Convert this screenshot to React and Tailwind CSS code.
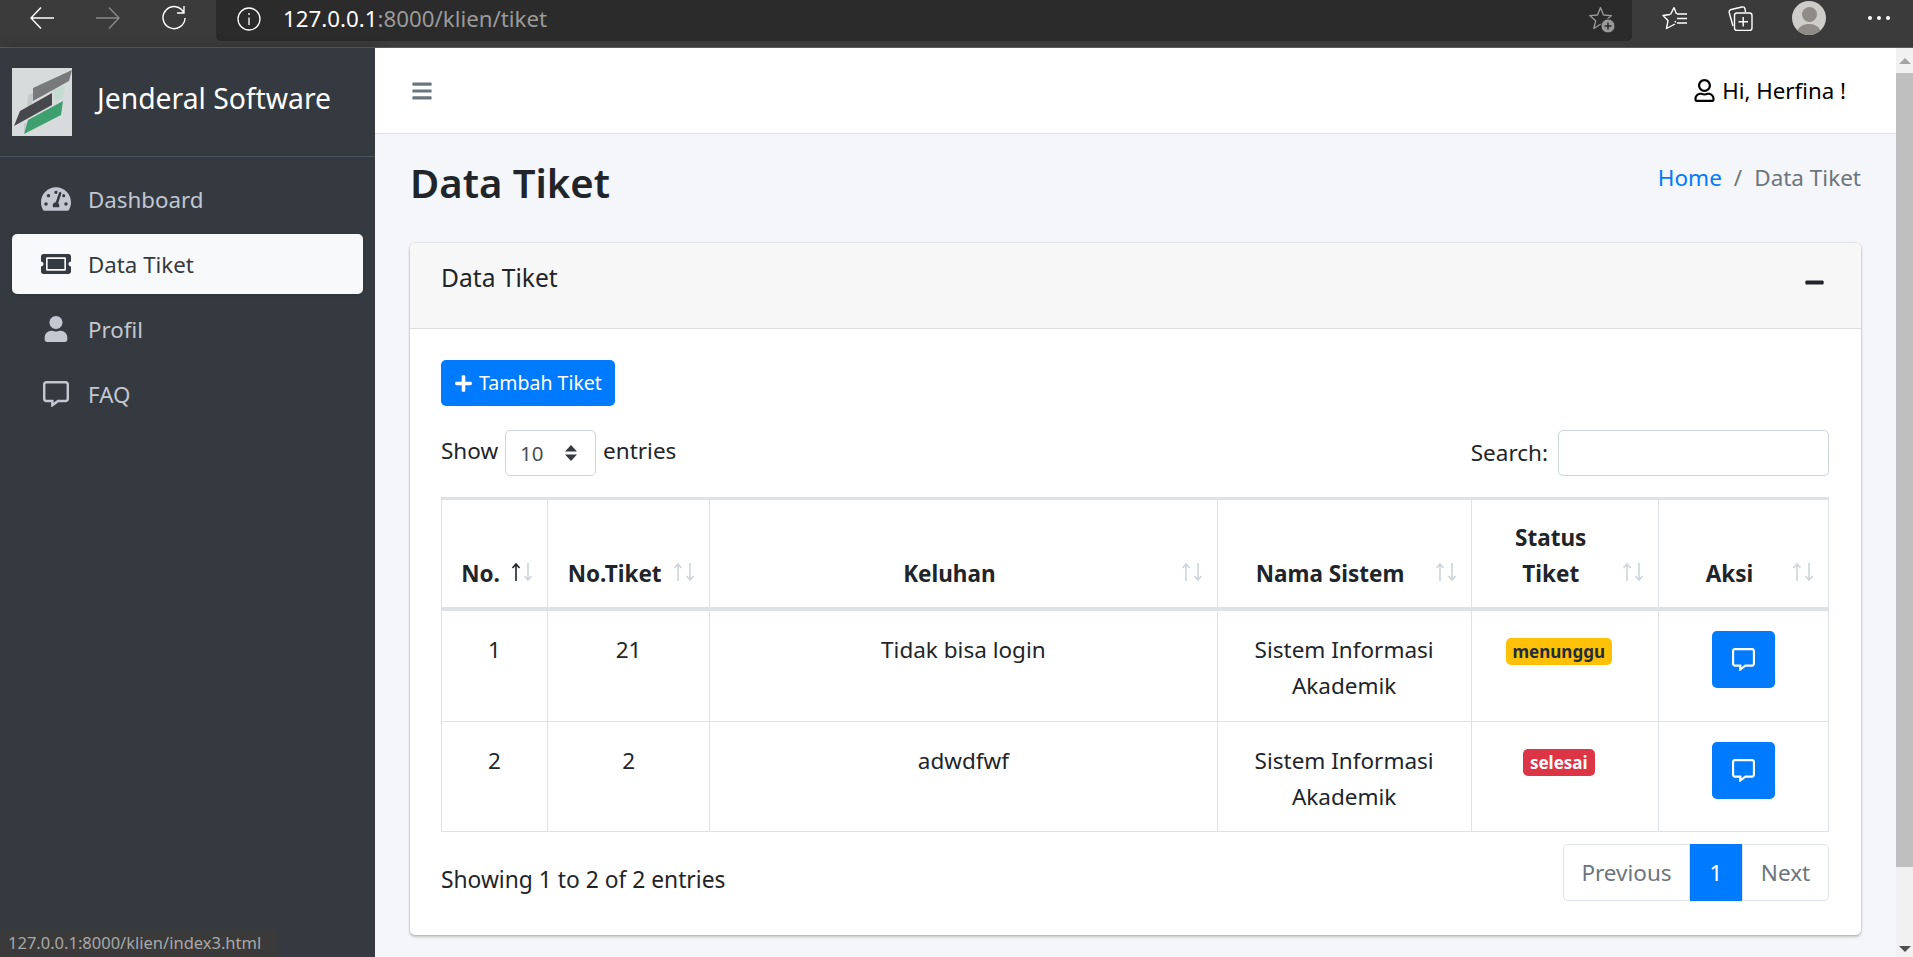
import React from 'react'
import { FaTachometerAlt, FaTicketAlt, FaUser, FaRegCommentAlt, FaPlus, FaBars, FaMinus, FaRegUser } from 'react-icons/fa'

const menu = [
  { label: 'Dashboard', Icon: FaTachometerAlt, size: 30 },
  { label: 'Data Tiket', Icon: FaTicketAlt, size: 30, active: true },
  { label: 'Profil', Icon: FaUser, size: 26 },
  { label: 'FAQ', Icon: FaRegCommentAlt, size: 26 },
]

const rows = [
  { no: '1', tiket: '21', keluhan: 'Tidak bisa login', status: 'menunggu', badge: 'bg-[#ffc107] text-[#1f2d3d]', height: 'h-[113px]' },
  { no: '2', tiket: '2', keluhan: 'adwdfwf', status: 'selesai', badge: 'bg-[#dc3545] text-white', height: 'h-[110px]' },
]

const SortArrows = ({ active }) => (
  <span className="absolute right-[12px] top-[61px] flex">
    <svg width="14" height="22" viewBox="0 0 14 22" fill="none" strokeWidth="1.6" className={active ? 'text-[#212529]' : 'text-[#ced4da]'} stroke="currentColor">
      <path d="M7 20V3M3.500 7 7 3l3.500 4" />
    </svg>
    <svg width="14" height="22" viewBox="0 0 14 22" fill="none" strokeWidth="1.6" stroke="#ced4da" className="-ml-[2px]">
      <path d="M7 2v17M3.500 15 7 19l3.500-4" />
    </svg>
  </span>
)

const Th = ({ children, active }) => (
  <th className="relative border border-[#dee2e6] border-b-[4px] border-b-[#dee2e6] pl-[13px] pr-[41px] pb-[15px] align-bottom text-center font-bold leading-[36px]">
    {children}
    <SortArrows active={active} />
  </th>
)

const Browser = () => (
  <div className="flex h-[48px] shrink-0 items-start border-b border-[#5c5c5c] bg-[#3b3b3b] text-white">
    <div className="flex h-[36px] w-[216px] shrink-0 items-center pl-[30px]">
      <svg width="24" height="24" viewBox="0 0 24 24" fill="none" stroke="#fff" strokeWidth="1.4">
        <path d="M24 12H1M11 1.500 1 12l10 10.500" />
      </svg>
      <svg width="24" height="24" viewBox="0 0 24 24" fill="none" stroke="#8a8a8a" strokeWidth="1.4" className="ml-[42px]">
        <path d="M0 12h23M13 1.500 23 12 13 22.500" />
      </svg>
      <svg width="24" height="26" viewBox="0 0 24 26" fill="none" stroke="#fff" strokeWidth="1.4" className="ml-[42px]">
        <path d="M22 8A11 11 0 1 0 23 13M22 1v7h-7" />
      </svg>
    </div>
    <div className="flex h-[41px] flex-1 items-center rounded-b-[5px] bg-[#2b2b2b] pb-[3px] pl-[21px] pr-[17px]">
      <svg width="24" height="24" viewBox="0 0 24 24" fill="none" stroke="#fff" strokeWidth="1.3">
        <circle cx="12" cy="12" r="11" />
        <path d="M12 10.500V18M12 6v2" />
      </svg>
      <span className="ml-[22px] text-[22.300px] leading-[28px]">
        127.0.0.1<span className="text-[#9a9a9a]">:8000/klien/tiket</span>
      </span>
      <svg width="27" height="27" viewBox="0 0 27 27" fill="none" stroke="#9a9a9a" strokeWidth="1.300" className="ml-auto">
        <path d="M12.500 1.500l3 7.500 8 .6-6 5.200 2 7.700-7-4.200-6.700 4.200 1.900-7.700-6-5.200 7.800-.6z" strokeLinejoin="round" />
        <circle cx="20" cy="20" r="7" fill="#9a9a9a" stroke="#2b2b2b" strokeWidth="1" />
        <path d="M20 16.500v7M16.500 20h7" stroke="#2b2b2b" strokeWidth="1.500" />
      </svg>
    </div>
    <div className="flex h-[36px] w-[281px] shrink-0 items-center pl-[30px]">
      <svg width="26" height="24" viewBox="0 0 26 24" fill="none" stroke="#fff" strokeWidth="1.400" strokeLinejoin="round">
        <path d="M12 1.500l2.500 6.500M13 15l.8 1.500M8 8.500 1 9.500l5 5-1.500 8L13 18M8.500 8.500 12 1.500" />
        <path d="M15 8h10M15 12.500h10M15 17h10" />
      </svg>
      <svg width="25" height="25" viewBox="0 0 25 25" fill="none" stroke="#fff" strokeWidth="1.400" className="ml-[40px]">
        <path d="M5 20 1.200 6.500a2.500 2.500 0 0 1 2-3L14 1a2.500 2.500 0 0 1 3 1.800L17.500 6" />
        <rect x="6.500" y="7" width="17.500" height="17.500" rx="2.500" />
        <path d="M15.200 11v9.500M10.500 15.700H20" />
      </svg>
      <div className="relative ml-[39px] h-[34px] w-[34px] overflow-hidden rounded-full bg-[#cfcdc9]">
        <div className="absolute left-[10px] top-[6px] h-[15px] w-[15px] rounded-full bg-[#8f8c88]" />
        <div className="absolute left-[4px] top-[23px] h-[24px] w-[26px] rounded-full bg-[#8f8c88]" />
      </div>
      <div className="ml-[42px] flex gap-[5px]">
        <span className="h-[4px] w-[4px] rounded-full bg-white" />
        <span className="h-[4px] w-[4px] rounded-full bg-white" />
        <span className="h-[4px] w-[4px] rounded-full bg-white" />
      </div>
    </div>
  </div>
)

const Logo = () => (
  <svg width="60" height="68" viewBox="0 0 60 68" className="shrink-0">
    <rect width="60" height="68" fill="#d8dbdb" />
    <polygon points="16,27 21,25 21,33 18,40 15,42" fill="#c4c8c9" />
    <polygon points="12,55 15,55 12,65" fill="#c4c8c9" />
    <polygon points="41,22 53,18 51,30 43,33" fill="#c3dcd1" />
    <polygon points="21,20 60,2 57,13 21,33" fill="#77797b" />
    <polygon points="8,43 40,25 40,37 2,58" fill="#46484c" />
    <polygon points="16,52 51,33 49,47 12,66" fill="#3fa06f" />
  </svg>
)

const Sidebar = () => (
  <aside className="w-[375px] shrink-0 bg-[#343a40] shadow-[4px_0_12px_rgba(0,0,0,0.2)]">
    <div className="flex h-[109px] items-center gap-[25px] border-b border-[#4b545c] pl-[12px]">
      <Logo />
      <span className="-mt-[7px] text-[28.300px] text-white">Jenderal Software</span>
    </div>
    <nav className="flex flex-col gap-[5px] px-[12px] pt-[12px]">
      {menu.map(({ label, Icon, size, active }) => (
        <div
          key={label}
          className={`flex h-[60px] items-center rounded-[5px] pl-[29px] ${active ? 'bg-[#f8f9fa] text-[#343a40] shadow' : 'text-[#c2c7d0]'}`}
        >
          <span className="flex w-[30px] justify-center"><Icon size={size} /></span>
          <span className="ml-[17px] pt-[2px] text-[22.300px]">{label}</span>
        </div>
      ))}
    </nav>
  </aside>
)

const Card = () => (
  <div className="rounded-[5px] bg-white shadow-[0_0_2px_rgba(0,0,0,0.25),0_2px_3px_rgba(0,0,0,0.2)]">
    <div className="flex h-[86px] items-start justify-between rounded-t-[5px] border-b border-[#dfdfdf] bg-[#f7f7f7] pl-[31px] pr-[36px] pt-[17px]">
      <h3 className="text-[24.600px] leading-[36px]">Data Tiket</h3>
      <FaMinus size={21} className="mt-[12px]" />
    </div>
    <div className="pl-[31px] pr-[32px] pt-[31px]">
      <button className="flex h-[46px] w-[174px] items-center justify-center gap-[6px] rounded-[5px] bg-[#007bff] text-[19.500px] text-white">
        <FaPlus size={19} />
        Tambah Tiket
      </button>

      <div className="mt-[24px] flex items-center justify-between">
        <div className="flex items-center text-[22.500px]">
          <span className="-mt-[4px]">Show</span>
          <div className="mx-[7px] flex h-[46px] w-[91px] items-center justify-between rounded-[5px] border border-[#ced4da] pl-[14px] pr-[18px] text-[20.500px] text-[#495057]">
            10
            <svg width="12" height="16" viewBox="0 0 12 16" fill="#343a40">
              <path d="M6 0l6 6.500H0zM6 16 0 9.500h12z" />
            </svg>
          </div>
          <span className="-mt-[4px]">entries</span>
        </div>
        <div className="flex items-center gap-[10px] text-[22.500px]">
          Search:
          <div className="h-[46px] w-[271px] rounded-[5px] border border-[#ced4da]" />
        </div>
      </div>

      <table className="mt-[21px] w-full table-fixed border-collapse border-t-[3px] border-[#dee2e6] text-[22.500px]">
        <colgroup>
          <col className="w-[106px]" />
          <col className="w-[162px]" />
          <col className="w-[507px]" />
          <col className="w-[254px]" />
          <col className="w-[187px]" />
          <col className="w-[170px]" />
        </colgroup>
        <thead>
          <tr className="h-[110px]">
            <Th active>No.</Th>
            <Th>No.Tiket</Th>
            <Th>Keluhan</Th>
            <Th>Nama Sistem</Th>
            <Th>Status Tiket</Th>
            <Th>Aksi</Th>
          </tr>
        </thead>
        <tbody>
          {rows.map((r) => (
            <tr key={r.no} className={`${r.height} text-center leading-[36px]`}>
              <td className="border border-[#dee2e6] px-[18px] pb-[12px] pt-[21px] align-top">{r.no}</td>
              <td className="border border-[#dee2e6] px-[18px] pb-[12px] pt-[21px] align-top">{r.tiket}</td>
              <td className="border border-[#dee2e6] px-[18px] pb-[12px] pt-[21px] align-top">{r.keluhan}</td>
              <td className="border border-[#dee2e6] px-[18px] pb-[12px] pt-[21px] align-top">Sistem Informasi Akademik</td>
              <td className="border border-[#dee2e6] pb-[12px] pl-[12px] pr-[24px] pt-[27px] align-top leading-none">
                <span className={`inline-block rounded-[5px] px-[7px] py-[4px] text-[17px] leading-[19px] font-bold ${r.badge}`}>{r.status}</span>
              </td>
              <td className="border border-[#dee2e6] px-[18px] pb-[12px] pt-[20px] align-top">
                <div className="mx-auto flex h-[57px] w-[63px] items-center justify-center rounded-[5px] bg-[#007bff] text-white">
                  <FaRegCommentAlt size={23} />
                </div>
              </td>
            </tr>
          ))}
        </tbody>
      </table>

      <div className="mt-[12px] flex items-start justify-between pb-[34px]">
        <span className="mt-[18px] text-[22.800px] leading-[36px]">Showing 1 to 2 of 2 entries</span>
        <div className="flex h-[57px] items-stretch text-[22.500px] text-[#6c757d]">
          <span className="flex w-[127px] items-center justify-center rounded-l-[5px] border border-[#dee2e6]">Previous</span>
          <span className="flex w-[52px] items-center justify-center bg-[#007bff] text-white">1</span>
          <span className="flex w-[87px] items-center justify-center rounded-r-[5px] border border-[#dee2e6]">Next</span>
        </div>
      </div>
    </div>
  </div>
)

const Scrollbar = () => (
  <div className="flex w-[17px] shrink-0 flex-col items-center bg-[#f1f1f1]">
    <div className="flex h-[25px] items-center">
      <div className="h-0 w-0 border-x-[6px] border-b-[6px] border-x-transparent border-b-[#a3a3a3]" />
    </div>
    <div className="h-[794px] w-full bg-[#bfbfbf]" />
    <div className="mt-auto flex h-[17px] items-center">
      <div className="h-0 w-0 border-x-[6px] border-t-[6px] border-x-transparent border-t-[#505050]" />
    </div>
  </div>
)

export default function App() {
  return (
    <div className="relative flex h-[957px] flex-col overflow-hidden font-['Noto_Sans',sans-serif] text-[#212529]">
      <Browser />
      <div className="flex min-h-0 flex-1">
        <Sidebar />
        <main className="min-w-0 flex-1 bg-[#f4f6f9]">
          <div className="flex h-[86px] items-center justify-between border-b border-[#dee2e6] bg-white pl-[36px] pr-[50px]">
            <FaBars size={22} className="text-[#6c757d]" />
            <div className="flex items-center gap-[6px] text-[22.300px] text-black">
              <FaRegUser size={23} />
              Hi, Herfina !
            </div>
          </div>
          <div className="px-[35px]">
            <div className="flex h-[109px] items-center justify-between">
              <h1 className="-mt-[12px] text-[40px] font-semibold">Data Tiket</h1>
              <div className="-mt-[21px] flex gap-[12px] text-[22.500px] text-[#6c757d]">
                <span className="text-[#007bff]">Home</span>
                <span>/</span>
                <span>Data Tiket</span>
              </div>
            </div>
            <Card />
          </div>
        </main>
        <Scrollbar />
      </div>
      {/* status bar, lies over the sidebar */}
      <div className="absolute bottom-0 left-0 flex h-[28px] w-[277px] items-center rounded-tr-[4px] bg-[#3a3a3a] pl-[8px] text-[16.500px] text-[#a8a8a8]">
        127.0.0.1:8000/klien/index3.html
      </div>
    </div>
  )
}
